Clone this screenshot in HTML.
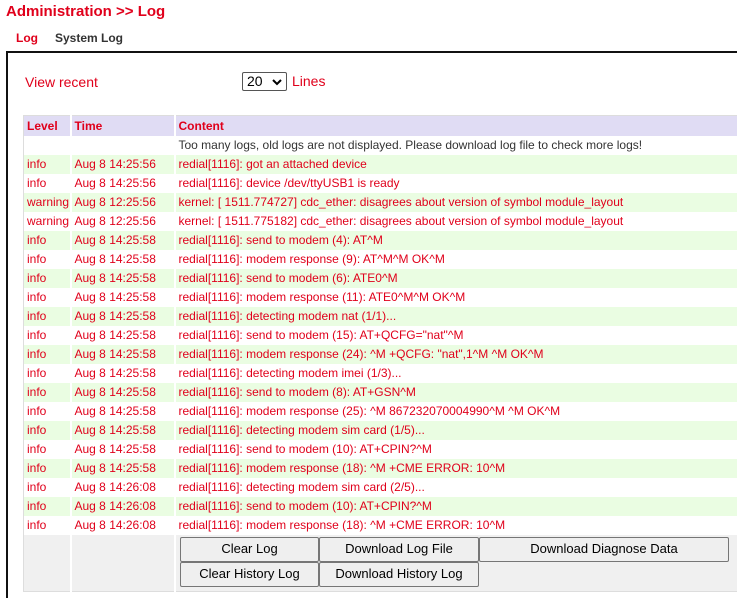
<!DOCTYPE html>
<html><head><style>
html,body{margin:0;width:737px;height:598px;overflow:hidden;background:#fff;font-family:"Liberation Sans",Arial,sans-serif;position:relative}
.t{position:absolute;left:6px;top:3px;font-size:15px;font-weight:bold;color:#e0001b}
.tabs{position:absolute;top:31px;font-size:12px;font-weight:bold}
.box{position:absolute;left:6px;top:51px;width:731px;height:547px;border:2px solid #111;border-right:none;border-bottom:none;box-sizing:border-box}
.vr{position:absolute;left:25px;top:74px;font-size:14px;color:#e0001b}
.sel{position:absolute;left:242px;top:72px;width:45px;height:19px;border:1px solid #555;border-radius:2px;box-sizing:border-box;font-size:14px;padding-left:4px;line-height:17px}
.sel svg{position:absolute;right:4px;top:6px}
.ln{position:absolute;left:292px;top:73px;font-size:14px;color:#e0001b}
.wrap{position:absolute;left:23px;top:115px;width:714px;height:480px;overflow:hidden}
table{border-collapse:collapse;width:740px;font-size:12px;color:#e0001b;background:#f0f0f0;border:1px solid #ddd}
td{height:19px;padding:0 0 0 3px;border-right:2px solid #fff;white-space:nowrap;box-sizing:border-box}
tr.h td{background:#e0dcf4;font-weight:bold;height:20px}
tr.g td{background:#eafde2}
tr.w td{background:#fff}
.btn{position:absolute;background:#efefef;border:1px solid #767676;border-radius:2px;font-size:13px;color:#000;text-align:center;box-sizing:border-box;line-height:22px}
</style></head><body>
<div class="t">Administration &gt;&gt; Log</div>
<div class="tabs"><span style="position:absolute;left:16px;color:#e0001b">Log</span><span style="position:absolute;left:55px;color:#333;width:80px">System Log</span></div>
<div class="box"></div>
<div class="vr">View recent</div>
<div class="sel">20<svg width="10" height="7" viewBox="0 0 10 7"><path d="M1 1l4 4 4-4" stroke="#000" stroke-width="2" fill="none"/></svg></div>
<div class="ln">Lines</div>
<div class="wrap">
<table>
<colgroup><col style="width:47px"><col style="width:104px"><col></colgroup>
<tr class="h"><td>Level</td><td>Time</td><td>Content</td></tr>
<tr class="w"><td></td><td></td><td style="color:#333">Too many logs, old logs are not displayed. Please download log file to check more logs!</td></tr>
<tr class="g"><td>info</td><td>Aug 8 14:25:56</td><td>redial[1116]: got an attached device</td></tr>
<tr class="w"><td>info</td><td>Aug 8 14:25:56</td><td>redial[1116]: device /dev/ttyUSB1 is ready</td></tr>
<tr class="g"><td>warning</td><td>Aug 8 12:25:56</td><td>kernel: [ 1511.774727] cdc_ether: disagrees about version of symbol module_layout</td></tr>
<tr class="w"><td>warning</td><td>Aug 8 12:25:56</td><td>kernel: [ 1511.775182] cdc_ether: disagrees about version of symbol module_layout</td></tr>
<tr class="g"><td>info</td><td>Aug 8 14:25:58</td><td>redial[1116]: send to modem (4): AT^M</td></tr>
<tr class="w"><td>info</td><td>Aug 8 14:25:58</td><td>redial[1116]: modem response (9): AT^M^M OK^M</td></tr>
<tr class="g"><td>info</td><td>Aug 8 14:25:58</td><td>redial[1116]: send to modem (6): ATE0^M</td></tr>
<tr class="w"><td>info</td><td>Aug 8 14:25:58</td><td>redial[1116]: modem response (11): ATE0^M^M OK^M</td></tr>
<tr class="g"><td>info</td><td>Aug 8 14:25:58</td><td>redial[1116]: detecting modem nat (1/1)...</td></tr>
<tr class="w"><td>info</td><td>Aug 8 14:25:58</td><td>redial[1116]: send to modem (15): AT+QCFG="nat"^M</td></tr>
<tr class="g"><td>info</td><td>Aug 8 14:25:58</td><td>redial[1116]: modem response (24): ^M +QCFG: "nat",1^M ^M OK^M</td></tr>
<tr class="w"><td>info</td><td>Aug 8 14:25:58</td><td>redial[1116]: detecting modem imei (1/3)...</td></tr>
<tr class="g"><td>info</td><td>Aug 8 14:25:58</td><td>redial[1116]: send to modem (8): AT+GSN^M</td></tr>
<tr class="w"><td>info</td><td>Aug 8 14:25:58</td><td>redial[1116]: modem response (25): ^M 867232070004990^M ^M OK^M</td></tr>
<tr class="g"><td>info</td><td>Aug 8 14:25:58</td><td>redial[1116]: detecting modem sim card (1/5)...</td></tr>
<tr class="w"><td>info</td><td>Aug 8 14:25:58</td><td>redial[1116]: send to modem (10): AT+CPIN?^M</td></tr>
<tr class="g"><td>info</td><td>Aug 8 14:25:58</td><td>redial[1116]: modem response (18): ^M +CME ERROR: 10^M</td></tr>
<tr class="w"><td>info</td><td>Aug 8 14:26:08</td><td>redial[1116]: detecting modem sim card (2/5)...</td></tr>
<tr class="g"><td>info</td><td>Aug 8 14:26:08</td><td>redial[1116]: send to modem (10): AT+CPIN?^M</td></tr>
<tr class="w"><td>info</td><td>Aug 8 14:26:08</td><td>redial[1116]: modem response (18): ^M +CME ERROR: 10^M</td></tr>
<tr><td style="height:57px"></td><td></td><td></td></tr>
</table>
</div>
<div class="btn" style="left:180px;top:537px;width:139px;height:25px">Clear Log</div>
<div class="btn" style="left:319px;top:537px;width:160px;height:25px">Download Log File</div>
<div class="btn" style="left:479px;top:537px;width:250px;height:25px">Download Diagnose Data</div>
<div class="btn" style="left:180px;top:562px;width:139px;height:25px">Clear History Log</div>
<div class="btn" style="left:319px;top:562px;width:160px;height:25px">Download History Log</div>
</body></html>
